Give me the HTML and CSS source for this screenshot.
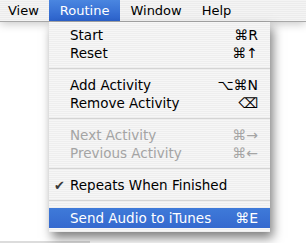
FILE: index.html
```html
<!DOCTYPE html>
<html lang="en">
<head>
    <meta charset="UTF-8">
    <title>Routine menu</title>
    <link rel="stylesheet" href="styles.css">
</head>
<body>
    <div class="menubar">
        <span class="menu-title first">View</span>
        <span class="menu-title open">Routine</span>
        <span class="menu-title">Window</span>
        <span class="menu-title">Help</span>
    </div>

    <div class="desk">
        <ul class="dropdown">
            <li class="item"><span>Start</span><span class="key">⌘R</span></li>
            <li class="item"><span>Reset</span><span class="key">⌘↑</span></li>
            <li class="sep"></li>
            <li class="item"><span>Add Activity</span><span class="key">⌥⌘N</span></li>
            <li class="item"><span>Remove Activity</span><span class="key">⌫</span></li>
            <li class="sep"></li>
            <li class="item off"><span>Next Activity</span><span class="key">⌘→</span></li>
            <li class="item off"><span>Previous Activity</span><span class="key">⌘←</span></li>
            <li class="sep"></li>
            <li class="item checked"><span>Repeats When Finished</span></li>
            <li class="sep"></li>
            <li class="item hot"><span>Send Audio to iTunes</span><span class="key">⌘E</span></li>
        </ul>
        <div class="edge"></div>
    </div>
</body>
</html>
```

FILE: styles.css
```css
body {
    margin: 0;
    width: 306px;
    height: 243px;
    overflow: hidden;
    background: #ffffff;
    font-family: "DejaVu Sans", sans-serif;
    font-size: 13px;
    color: #000;
}

.menubar {
    position: relative;
    z-index: 2;
    display: flex;
    height: 21px;
    border-bottom: 1px solid #a8a8a8;
    background: repeating-linear-gradient(#f4f4f4 0 1px, #ececec 1px 2px);
    box-shadow: 0 2px 10px rgba(0, 0, 0, 0.22);
}

.menu-title {
    padding: 0 10px;
    line-height: 21px;
}

.menu-title.first {
    padding-left: 8px;
}

.menu-title.open {
    padding: 0 11px;
    color: #fff;
    background: linear-gradient(#4a86e0, #2c62cc);
}

.desk {
    position: relative;
    height: 221px;
}

.dropdown {
    position: absolute;
    left: 49px;
    top: 0;
    width: 221px;
    margin: 0;
    padding: 4px 0;
    list-style: none;
    font-size: 13.5px;
    background: repeating-linear-gradient(#f6f6f6 0 1px, #eeeeee 1px 2px);
    box-shadow: 3px 6px 10px rgba(0, 0, 0, 0.5);
    z-index: 3;
}

.item {
    position: relative;
    display: flex;
    justify-content: space-between;
    height: 18px;
    line-height: 19px;
    padding: 0 12px 0 21px;
}

.key {
    font-size: 14px;
}

.item.off {
    color: #a4a4a4;
}

.item.checked::before {
    content: "✔";
    position: absolute;
    left: 5px;
    font-size: 13px;
    color: #3a3a3a;
}

.item.hot {
    height: 20px;
    line-height: 20px;
    color: #fff;
    background: linear-gradient(#3f7ad9, #3569cf);
}

.sep {
    height: 14px;
    background: linear-gradient(transparent 6px, #d4d4d4 6px 7px, transparent 7px);
}

.edge {
    position: absolute;
    left: 0;
    bottom: 0;
    width: 90px;
    height: 2px;
    background: #dcdcdc;
}
```
